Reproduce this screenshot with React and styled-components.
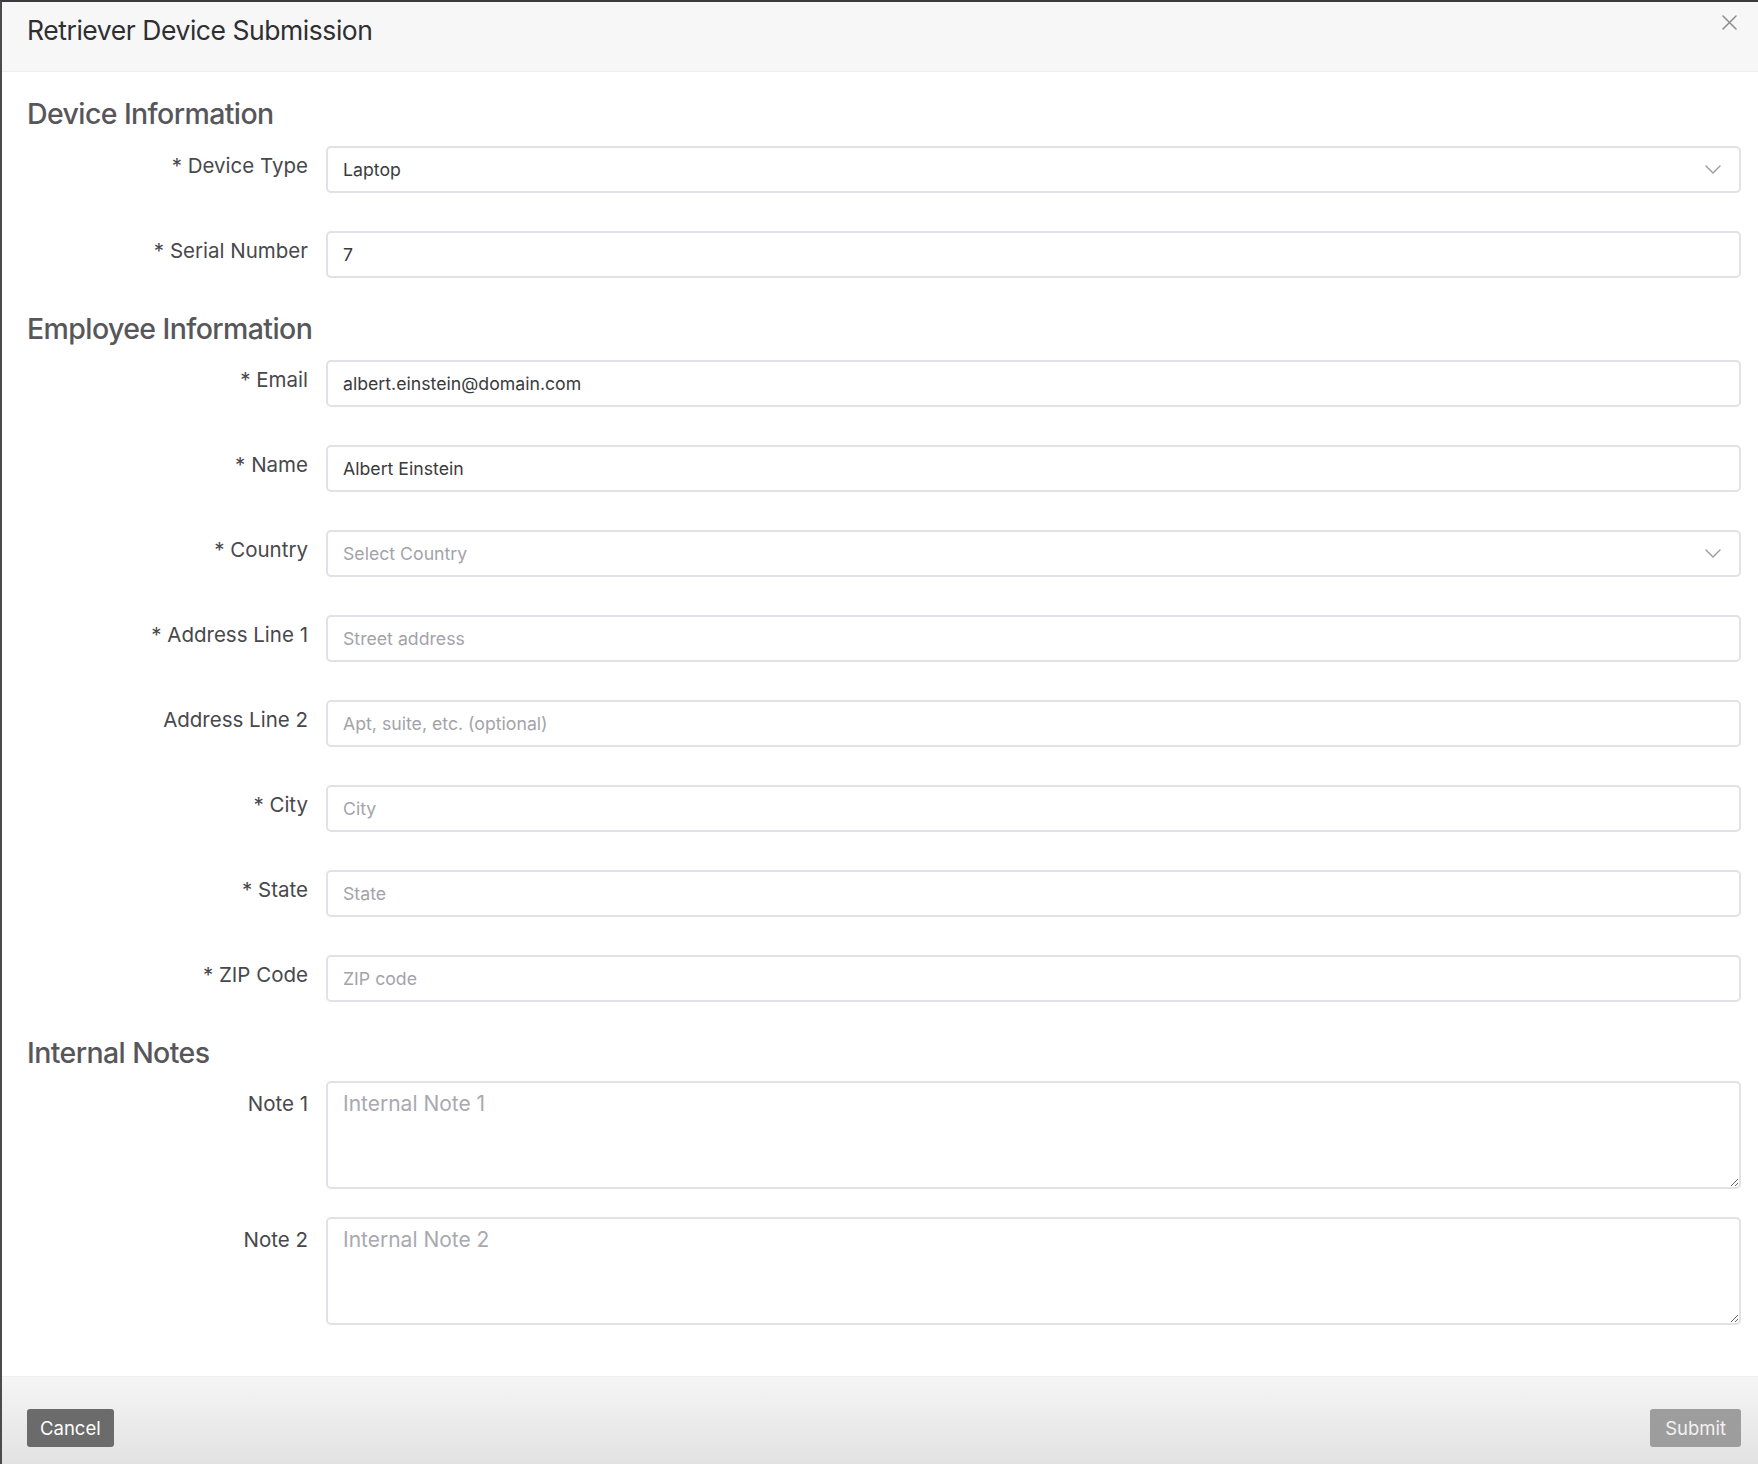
import React from 'react'
import styled, { createGlobalStyle } from 'styled-components'

const GlobalStyle = createGlobalStyle`
  html, body {
    margin: 0;
    padding: 0;
    background: #ffffff;
  }
  body {
    font-family: Inter, "Noto Sans", "Liberation Sans", sans-serif;
    -webkit-font-smoothing: antialiased;
  }
  * { box-sizing: border-box; }
`

const Modal = styled.div`
  min-height: 100vh;
  display: flex;
  flex-direction: column;
  border-top: 2px solid #3b3b3d;
  border-left: 2px solid #4b4b4e;
  background: #fff;
`

const Header = styled.header`
  height: 70px;
  flex: none;
  display: flex;
  justify-content: space-between;
  align-items: flex-start;
  padding: 12px 21px 0 25px;
  background: #f7f7f7;
  border-bottom: 1px solid #efefef;
`

const Title = styled.h1`
  margin: 0;
  font-size: 26.5px;
  line-height: 32px;
  font-weight: 400;
  letter-spacing: -0.45px;
  color: #2f2f32;
`

const CloseButton = styled.button`
  padding: 0;
  width: 16px;
  height: 16px;
  border: 0;
  background: none;
  cursor: pointer;
  display: flex;
  align-items: center;
  justify-content: center;
`

const Body = styled.form`
  flex: 1;
  padding: 24px 17px 51px 25px;
`

const Section = styled.section`
  & + & {
    margin-top: 33px;
  }
`

const SectionTitle = styled.h2`
  margin: 0 0 ${p => p.$gap}px;
  font-size: 28.5px;
  line-height: 36px;
  font-weight: 500;
  letter-spacing: -0.6px;
  color: #57575b;
`

const Fields = styled.div`
  display: flex;
  flex-direction: column;
  gap: ${p => p.$gap}px;
`

const Row = styled.div`
  display: grid;
  grid-template-columns: 281px 1fr;
  column-gap: 18px;
  align-items: start;
`

const Label = styled.label`
  padding-top: ${p => (p.$multi ? 11 : 8)}px;
  text-align: right;
  font-size: 20.5px;
  line-height: 24px;
  color: #48484c;
  white-space: nowrap;
`

const fieldBase = `
  width: 100%;
  border: 2px solid #e1e1e7;
  border-radius: 5px;
  background: #fff;
  font-family: Inter, "Noto Sans", "Liberation Sans", sans-serif;
  color: #3a3a3e;
  outline: none;
  &::placeholder { color: #a3a3a9; }
`

const Input = styled.input`
  ${fieldBase}
  height: 47px;
  padding: 0 15px;
  font-size: 17.7px;
`

const TextArea = styled.textarea`
  ${fieldBase}
  display: block;
  height: 108px;
  padding: 7px 15px;
  font-size: 21px;
  line-height: 28px;
  resize: vertical;
  &::placeholder { color: #a9a9af; }
`

const SelectBox = styled.div`
  height: 47px;
  display: flex;
  align-items: center;
  justify-content: space-between;
  padding: 0 18px 0 15px;
  border: 2px solid #e1e1e7;
  border-radius: 5px;
  background: #fff;
  font-size: 17.7px;
  color: ${p => (p.$empty ? '#a3a3a9' : '#3a3a3e')};
  cursor: pointer;
`

const Footer = styled.footer`
  flex: none;
  height: 88px;
  display: flex;
  justify-content: space-between;
  align-items: flex-start;
  padding: 32px 17px 0 25px;
  background: linear-gradient(#f5f5f5, #e2e2e2);
  border-top: 1px solid #f0f0f0;
`

const Button = styled.button`
  height: 38px;
  padding: 0 ${p => p.$pad}px;
  border: 0;
  border-radius: 3px;
  background: ${p => (p.$muted ? '#9d9d9d' : '#6b6b6b')};
  color: ${p => (p.$muted ? '#f2f2f2' : '#ffffff')};
  font-family: Inter, "Noto Sans", "Liberation Sans", sans-serif;
  font-size: 18.5px;
  cursor: pointer;
`

const Chevron = () => (
  <svg width="16" height="9" viewBox="0 0 16 9" fill="none">
    <polyline points="1,1 8,8 15,1" stroke="#9a9aa0" strokeWidth="1.4" strokeLinecap="round" strokeLinejoin="round" />
  </svg>
)

const CloseIcon = () => (
  <svg width="15" height="15" viewBox="0 0 15 15" fill="none">
    <path d="M1 1L14 14M14 1L1 14" stroke="#8c8c90" strokeWidth="1.5" strokeLinecap="round" />
  </svg>
)

const Select = ({ value, placeholder }) => (
  <SelectBox $empty={!value}>
    <span>{value || placeholder}</span>
    <Chevron />
  </SelectBox>
)

const employeeFields = [
  { label: '* Email', value: 'albert.einstein@domain.com' },
  { label: '* Name', value: 'Albert Einstein' },
  { label: '* Country', select: true, placeholder: 'Select Country' },
  { label: '* Address Line 1', placeholder: 'Street address' },
  { label: 'Address Line 2', placeholder: 'Apt, suite, etc. (optional)' },
  { label: '* City', placeholder: 'City' },
  { label: '* State', placeholder: 'State' },
  { label: '* ZIP Code', placeholder: 'ZIP code' },
]

const Field = ({ label, value, placeholder, select }) => (
  <Row>
    <Label>{label}</Label>
    {select ? (
      <Select value={value} placeholder={placeholder} />
    ) : (
      <Input defaultValue={value} placeholder={placeholder} />
    )}
  </Row>
)

const App = () => {
  return (
    <>
      <GlobalStyle />
      <Modal>
        <Header>
          <Title>Retriever Device Submission</Title>
          <CloseButton type="button" aria-label="Close">
            <CloseIcon />
          </CloseButton>
        </Header>
        <Body onSubmit={e => e.preventDefault()}>
          <Section>
            <SectionTitle $gap={14}>Device Information</SectionTitle>
            <Fields $gap={38}>
              <Field label="* Device Type" select value="Laptop" />
              <Field label="* Serial Number" value="7" />
            </Fields>
          </Section>
          <Section>
            <SectionTitle $gap={13}>Employee Information</SectionTitle>
            <Fields $gap={38}>
              {employeeFields.map(f => (
                <Field key={f.label} {...f} />
              ))}
            </Fields>
          </Section>
          <Section>
            <SectionTitle $gap={10}>Internal Notes</SectionTitle>
            <Fields $gap={28}>
              <Row>
                <Label $multi>Note 1</Label>
                <TextArea placeholder="Internal Note 1" />
              </Row>
              <Row>
                <Label $multi>Note 2</Label>
                <TextArea placeholder="Internal Note 2" />
              </Row>
            </Fields>
          </Section>
        </Body>
        <Footer>
          <Button type="button" $pad={13}>Cancel</Button>
          <Button type="submit" $muted $pad={15}>Submit</Button>
        </Footer>
      </Modal>
    </>
  )
}

export default App
